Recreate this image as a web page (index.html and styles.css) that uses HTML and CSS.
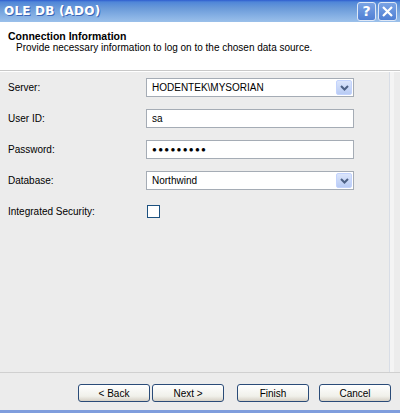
FILE: index.html
```html
<!DOCTYPE html>
<html>
<head>
<meta charset="utf-8">
<link rel="stylesheet" href="styles.css">
</head>
<body>
<div class="dlg">
  <div class="titlebar">
    <span class="title">OLE DB (ADO)</span>
    <div class="tbtns">
      <span class="tbtn">?</span>
      <span class="tbtn x">
        <svg width="13" height="13" viewBox="0 0 13 13"><path d="M2 2L11 11M11 2L2 11" stroke="#fff" stroke-width="2.2"/></svg>
      </span>
    </div>
  </div>
  <div class="header">
    <div class="h-title">Connection Information</div>
    <div class="h-sub">Provide necessary information to log on to the chosen data source.</div>
  </div>
  <div class="body">
    <div class="panel">
      <div class="row">
        <label>Server:</label>
        <div class="combo"><span>HODENTEK\MYSORIAN</span><span class="arrow"><svg width="9" height="6" viewBox="0 0 9 6"><path d="M1 1L4.5 4.5L8 1" stroke="#4d6185" stroke-width="2" fill="none"/></svg></span></div>
      </div>
      <div class="row">
        <label>User ID:</label>
        <div class="field">sa</div>
      </div>
      <div class="row">
        <label>Password:</label>
        <div class="field pw">●●●●●●●●●</div>
      </div>
      <div class="row">
        <label>Database:</label>
        <div class="combo"><span>Northwind</span><span class="arrow"><svg width="9" height="6" viewBox="0 0 9 6"><path d="M1 1L4.5 4.5L8 1" stroke="#4d6185" stroke-width="2" fill="none"/></svg></span></div>
      </div>
      <div class="row">
        <label>Integrated Security:</label>
        <div class="check"></div>
      </div>
    </div>
    <div class="footer">
      <button class="btn">&lt; Back</button>
      <button class="btn">Next &gt;</button>
      <button class="btn gap">Finish</button>
      <button class="btn gap2">Cancel</button>
    </div>
  </div>
</div>
</body>
</html>
```
FILE: styles.css
```css
html, body {
  margin: 0;
  padding: 0;
  width: 400px;
  height: 413px;
  overflow: hidden;
  background: #ececec;
  font-family: "Liberation Sans", Arial, sans-serif;
  font-size: 10px;
  color: #000;
}
.dlg {
  width: 400px;
  height: 413px;
  display: flex;
  flex-direction: column;
  box-sizing: border-box;
  border-bottom: 3px solid #7f9ddd;
}
.titlebar {
  height: 22px;
  flex: none;
  display: flex;
  align-items: center;
  justify-content: space-between;
  background: linear-gradient(to bottom, #2f5dcf 0, #4f86d8 2px, #6a9ad9 8px, #86b0e4 16px, #9bc0ea 22px);
  padding: 0 3px 0 4px;
  box-sizing: border-box;
}
.title {
  color: #fff;
  font-family: "DejaVu Sans", sans-serif;
  font-weight: bold;
  font-size: 12px;
  letter-spacing: 0.2px;
  text-shadow: 1px 1px 0 #3a66b8;
}
.tbtns {
  display: flex;
  gap: 2px;
}
.tbtn {
  width: 19px;
  height: 19px;
  box-sizing: border-box;
  border: 1px solid #dfe8f6;
  border-radius: 3px;
  background: linear-gradient(#7aa3e4, #4f7fd4);
  color: #fff;
  font-family: "DejaVu Sans", sans-serif;
  font-weight: bold;
  font-size: 14px;
  display: flex;
  align-items: center;
  justify-content: center;
  line-height: 1;
}
.header {
  height: 49px;
  flex: none;
  background: #fff;
  padding: 8px 0 0 8px;
  box-sizing: border-box;
  border-bottom: 1px solid #c8c8c8;
}
.h-title {
  font-weight: bold;
  font-size: 10.5px;
  line-height: 12px;
}
.h-sub {
  padding-left: 8px;
  line-height: 12px;
}
.body {
  flex: 1;
  display: flex;
  flex-direction: column;
  border-top: 1px solid #fff;
  background: #ececec;
}
.panel {
  flex: 1;
  margin-right: 10px;
  border-right: 1px solid #d8dde6;
  padding: 6px 0 0 8px;
  display: flex;
  flex-direction: column;
  gap: 12px;
  box-shadow: 4px 0 0 #f4f4f4;
}
.row {
  display: flex;
  align-items: center;
  height: 19px;
}
.row label {
  width: 138px;
  flex: none;
}
.field, .combo {
  width: 208px;
  height: 19px;
  box-sizing: border-box;
  border: 1px solid #a5acb5;
  background: #fff;
  display: flex;
  align-items: center;
  padding-left: 5px;
}
.field.pw {
  font-size: 8px;
  letter-spacing: 1.3px;
}
.combo {
  justify-content: space-between;
  padding-right: 1px;
}
.arrow {
  width: 16px;
  height: 15px;
  box-sizing: border-box;
  border: 1px solid #c3d3fd;
  border-radius: 2px;
  background: linear-gradient(#dbe5fb, #b8cbf4);
  display: flex;
  align-items: center;
  justify-content: center;
}
.check {
  width: 13px;
  height: 13px;
  box-sizing: border-box;
  border: 1px solid #1c5180;
  background: #fff;
  margin-left: 1px;
}
.footer {
  flex: none;
  height: 38px;
  border-top: 1px solid #d0d0d0;
  display: flex;
  align-items: flex-start;
  padding: 11px 0 0 78px;
  box-sizing: border-box;
}
.btn {
  width: 72px;
  height: 18px;
  box-sizing: border-box;
  border: 1px solid #2a4b78;
  border-radius: 3px;
  background: linear-gradient(#ffffff, #f0f0ea 70%, #d6d0c5);
  font-family: inherit;
  font-size: 10px;
  padding: 0;
  margin-right: 2px;
  color: #000;
}
.btn.gap { margin-left: 11px; margin-right: 10px; }
```
